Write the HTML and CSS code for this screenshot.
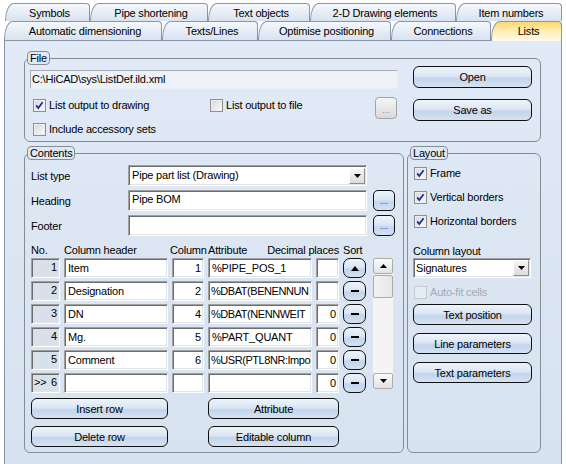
FILE: index.html
```html
<!DOCTYPE html>
<html lang="en">
  <head>
    <meta charset="UTF-8" />
    <meta name="viewport" content="width=device-width, initial-scale=1.0" />
    <title>Lists</title>
    <link rel="stylesheet" href="styles.css">
  </head>
  <body>
    <div class="tabs tabs-back">
      <div class="tab tab-symbols">Symbols</div>
      <div class="tab tab-pipe">Pipe shortening</div>
      <div class="tab tab-text">Text objects</div>
      <div class="tab tab-2d">2-D Drawing elements</div>
      <div class="tab tab-items">Item numbers</div>
    </div>
    <div class="tabs tabs-front">
      <div class="tab tab-auto">Automatic dimensioning</div>
      <div class="tab tab-lines">Texts/Lines</div>
      <div class="tab tab-optim">Optimise positioning</div>
      <div class="tab tab-conn">Connections</div>
      <div class="tab tab-lists active">Lists</div>
    </div>

    <div class="panel">
      <fieldset class="group file">
        <legend>File</legend>
        <div class="file-body">
          <div class="file-left">
            <div class="path">C:\HiCAD\sys\ListDef.ild.xml</div>
            <div class="file-opts">
              <label class="opt opt-draw">
                <span class="check"><svg width="11" height="11" viewBox="0 0 11 11"><path d="M2.2 5.4 L4.3 8 L8.6 2.3" fill="none" stroke="#1b2c9a" stroke-width="1.7"/></svg></span>List output to drawing
              </label>
              <label class="opt opt-file"><span class="check"></span>List output to file</label>
              <button class="dots-btn disabled">...</button>
            </div>
            <label class="opt opt-acc"><span class="check"></span>Include accessory sets</label>
          </div>
          <div class="file-right">
            <button class="btn">Open</button>
            <button class="btn btn-save">Save as</button>
          </div>
        </div>
      </fieldset>

      <div class="lower">
        <fieldset class="group contents">
          <legend>Contents</legend>
          <div class="contents-body">
            <div class="form-row">
              <span class="form-label">List type</span>
              <div class="field select wide">
                <span class="select-text">Pipe part list (Drawing)</span>
                <span class="drop"><svg width="7" height="4" viewBox="0 0 7 4"><path d="M0 0 H7 L3.5 4 Z" fill="#000"/></svg></span>
              </div>
            </div>
            <div class="form-row">
              <span class="form-label">Heading</span>
              <div class="field wide">Pipe BOM</div>
              <button class="dots-btn">...</button>
            </div>
            <div class="form-row">
              <span class="form-label">Footer</span>
              <div class="field wide"></div>
              <button class="dots-btn">...</button>
            </div>

            <div class="grid-head">
              <span>No.</span>
              <span>Column header</span>
              <span class="head-col">Column</span>
              <span class="head-attr"><span>Attribute</span><span>Decimal places</span></span>
              <span>Sort</span>
            </div>

            <div class="table-wrap">
              <div class="grid">
                <div class="cell no">1</div>
                <div class="cell">Item</div>
                <div class="cell num">1</div>
                <div class="cell">%PIPE_POS_1</div>
                <div class="cell num"></div>
                <div class="sort"><span class="arrow-up"></span></div>

                <div class="cell no">2</div>
                <div class="cell">Designation</div>
                <div class="cell num">2</div>
                <div class="cell attr">%DBAT(BENENNUN</div>
                <div class="cell num"></div>
                <div class="sort"><span class="dash"></span></div>

                <div class="cell no">3</div>
                <div class="cell">DN</div>
                <div class="cell num">4</div>
                <div class="cell attr">%DBAT(NENNWEIT</div>
                <div class="cell num">0</div>
                <div class="sort"><span class="dash"></span></div>

                <div class="cell no">4</div>
                <div class="cell">Mg.</div>
                <div class="cell num">5</div>
                <div class="cell">%PART_QUANT</div>
                <div class="cell num">0</div>
                <div class="sort"><span class="dash"></span></div>

                <div class="cell no">5</div>
                <div class="cell">Comment</div>
                <div class="cell num">6</div>
                <div class="cell attr">%USR(PTL8NR:Impo</div>
                <div class="cell num">0</div>
                <div class="sort"><span class="dash"></span></div>

                <div class="cell no no-new"><span>&gt;&gt;</span><span>6</span></div>
                <div class="cell"></div>
                <div class="cell num"></div>
                <div class="cell"></div>
                <div class="cell num">0</div>
                <div class="sort"><span class="dash"></span></div>
              </div>

              <div class="scrollbar">
                <div class="sb-btn"><svg width="7" height="4" viewBox="0 0 7 4"><path d="M0 4 H7 L3.5 0 Z" fill="#000"/></svg></div>
                <div class="sb-thumb"></div>
                <div class="sb-track"></div>
                <div class="sb-btn"><svg width="7" height="4" viewBox="0 0 7 4"><path d="M0 0 H7 L3.5 4 Z" fill="#000"/></svg></div>
              </div>
            </div>

            <div class="actions">
              <button class="btn">Insert row</button>
              <button class="btn">Attribute</button>
              <button class="btn">Delete row</button>
              <button class="btn">Editable column</button>
            </div>
          </div>
        </fieldset>

        <fieldset class="group layout">
          <legend>Layout</legend>
          <div class="layout-body">
            <div class="lay-checks">
              <label class="opt">
                <span class="check"><svg width="11" height="11" viewBox="0 0 11 11"><path d="M2.2 5.4 L4.3 8 L8.6 2.3" fill="none" stroke="#1b2c9a" stroke-width="1.7"/></svg></span>Frame
              </label>
              <label class="opt">
                <span class="check"><svg width="11" height="11" viewBox="0 0 11 11"><path d="M2.2 5.4 L4.3 8 L8.6 2.3" fill="none" stroke="#1b2c9a" stroke-width="1.7"/></svg></span>Vertical borders
              </label>
              <label class="opt">
                <span class="check"><svg width="11" height="11" viewBox="0 0 11 11"><path d="M2.2 5.4 L4.3 8 L8.6 2.3" fill="none" stroke="#1b2c9a" stroke-width="1.7"/></svg></span>Horizontal borders
              </label>
            </div>
            <div class="lay-label">Column layout</div>
            <div class="field select lay-select">
              <span class="select-text">Signatures</span>
              <span class="drop"><svg width="7" height="4" viewBox="0 0 7 4"><path d="M0 0 H7 L3.5 4 Z" fill="#000"/></svg></span>
            </div>
            <label class="opt opt-disabled"><span class="check"></span>Auto-fit cells</label>
            <div class="lay-buttons">
              <button class="btn">Text position</button>
              <button class="btn">Line parameters</button>
              <button class="btn">Text parameters</button>
            </div>
          </div>
        </fieldset>
      </div>
    </div>
  </body>
</html>
```

FILE: styles.css
```css
body {
  margin: 0;
  padding-top: 3px;
  width: 566px;
  height: 464px;
  overflow: hidden;
  background: #fff;
  font-family: "Liberation Sans", Arial, sans-serif;
  font-size: 11px;
  letter-spacing: -0.2px;
  color: #000;
}

/* tab strip */
.tabs {
  display: flex;
}
.tabs-back {
  margin-left: 5px;
  height: 18px;
}
.tabs-front {
  margin-left: 4px;
  height: 19px;
  position: relative;
  z-index: 1;
}
.tab {
  box-sizing: border-box;
  flex: none;
  border: 1px solid #8a97a8;
  border-bottom: none;
  border-radius: 9px 4px 0 0 / 17px 4px 0 0;
  background: linear-gradient(#f5f8fc, #d8e2ef);
  text-align: center;
  padding-left: 4px;
  white-space: nowrap;
}
.tabs-back .tab {
  height: 18px;
  line-height: 18px;
}
.tabs-front .tab {
  height: 19px;
  line-height: 19px;
}
.tab.active {
  height: 20px;
  background: linear-gradient(#fbd76e, #fff0bd 55%, #fffbea);
}
.tab-symbols { width: 85px; }
.tab-pipe { width: 118px; }
.tab-text { width: 102px; }
.tab-2d { width: 146px; }
.tab-items { width: 106px; }
.tab-auto { width: 158px; }
.tab-lines { width: 96px; }
.tab-optim { width: 133px; }
.tab-conn { width: 100px; }
.tab-lists { width: 71px; }

.panel {
  box-sizing: border-box;
  margin-left: 4px;
  width: 558px;
  height: 430px;
  border: 1px solid #8a97a8;
  border-bottom: none;
  background: linear-gradient(#e1eaf6, #d7e2f0);
  padding: 10px 0 0 19px;
}

/* group boxes */
.group {
  box-sizing: border-box;
  margin: 0;
  padding: 0;
  min-width: 0;
  border: 1px solid #858c96;
  border-radius: 6px;
}
.group legend {
  margin-left: 2px;
  padding: 0 2px;
  border: 1px solid #858c96;
  border-radius: 4px;
  line-height: 12px;
}
.file {
  width: 517px;
  height: 91px;
}
.lower {
  display: flex;
  gap: 3px;
  margin-top: 4px;
}
.contents {
  width: 380px;
  height: 307px;
}
.layout {
  width: 134px;
  height: 307px;
}

/* inputs */
.field {
  box-sizing: border-box;
  height: 21px;
  padding-left: 3px;
  line-height: 17px;
  background: #fff;
  border: 1px solid;
  border-color: #a0a0a0 #fff #fff #a0a0a0;
  box-shadow: inset 1px 1px #6d6d6d, inset -1px -1px #e3e3e3;
  white-space: nowrap;
  overflow: hidden;
}
.select {
  display: flex;
  align-items: center;
}
.select-text {
  flex: 1;
}
.drop {
  box-sizing: border-box;
  width: 16px;
  height: 16px;
  margin-right: 1px;
  display: flex;
  align-items: center;
  justify-content: center;
  background: linear-gradient(#f4f4f4, #dcdcdc);
  border: 1px solid;
  border-color: #fff #8d8d8d #8d8d8d #fff;
}
.path {
  box-sizing: border-box;
  height: 19px;
  padding-left: 1px;
  line-height: 17px;
  border: 1px solid;
  border-color: #a7aeb8 #e9eef5 #e9eef5 #a7aeb8;
  background: #edf2f9;
}

/* check boxes */
.opt {
  display: flex;
  align-items: center;
  height: 13px;
  line-height: 13px;
  white-space: nowrap;
}
.check {
  box-sizing: border-box;
  flex: none;
  width: 13px;
  height: 13px;
  margin-right: 3px;
  border: 1px solid #8e8f8f;
  background: linear-gradient(135deg, #d6d6d6, #fbfbfb);
  box-shadow: inset 0 0 0 1px #eeeeee;
  display: flex;
  align-items: center;
  justify-content: center;
}
.opt-disabled {
  color: #a3aab4;
}
.opt-disabled .check {
  border-color: #c3c9d1;
  background: #e6ecf3;
  box-shadow: none;
}

/* buttons */
.btn {
  box-sizing: border-box;
  display: block;
  height: 21px;
  padding: 0;
  border: 1px solid #111;
  border-radius: 6px;
  background: linear-gradient(#eef4fb, #dbe6f4 45%, #c3d5ec 58%, #d4e2f2);
  font: inherit;
  letter-spacing: inherit;
  color: #000;
}
.dots-btn {
  box-sizing: border-box;
  flex: none;
  width: 22px;
  height: 21px;
  padding: 0;
  border: 1px solid #111;
  border-radius: 5px;
  background: linear-gradient(#eef4fb, #dbe6f4 45%, #c3d5ec 58%, #d4e2f2);
  font: inherit;
  font-size: 9px;
  color: #4b2a86;
}
.dots-btn.disabled {
  height: 22px;
  border-color: #a3a3a3;
  border-radius: 4px;
  background: linear-gradient(#f6f6f6, #d9d9d9);
  color: #8c8c8c;
  margin: 0 1px 0 auto;
  padding-top: 3px;
}

/* file group */
.file-body {
  display: flex;
  gap: 15px;
  padding: 5px 0 0 5px;
}
.file-left {
  width: 368px;
}
.file-opts {
  display: flex;
  align-items: flex-start;
  height: 22px;
  margin-top: 8px;
}
.opt-draw {
  width: 177px;
  margin: 2px 0 0 3px;
}
.opt-file {
  margin-top: 2px;
}
.opt-acc {
  margin: 4px 0 0 3px;
}
.file-right {
  width: 119px;
  margin-top: -4px;
}
.file-right .btn {
  width: 119px;
  height: 22px;
}
.btn-save {
  margin-top: 11px;
}

/* contents group */
.contents-body {
  padding: 5px 0 0 6px;
}
.form-row {
  display: flex;
  align-items: center;
  height: 21px;
}
.form-row + .form-row {
  margin-top: 4px;
}
.form-label {
  width: 97px;
}
.wide {
  width: 239px;
}
.form-row .dots-btn {
  margin-left: 6px;
}

.grid-head,
.grid {
  display: grid;
  grid-template-columns: 29px 104px 32px 104px 23px 23px;
  column-gap: 4px;
}
.grid-head {
  margin-top: 7px;
  height: 15px;
  line-height: 14px;
  white-space: nowrap;
}
.head-col {
  margin-left: -2px;
}
.head-attr {
  grid-column: span 2;
  display: flex;
  justify-content: space-between;
}
.table-wrap {
  display: flex;
  align-items: flex-start;
}
.grid {
  grid-auto-rows: 20px;
  row-gap: 3px;
}
.cell {
  box-sizing: border-box;
  padding: 0 2px 0 3px;
  line-height: 18px;
  background: #fff;
  border: 1px solid;
  border-color: #a0a0a0 #fff #fff #a0a0a0;
  box-shadow: inset 1px 1px #6d6d6d, inset -1px -1px #e3e3e3;
  white-space: nowrap;
  overflow: hidden;
}
.attr {
  padding-left: 2px;
  letter-spacing: -0.45px;
}
.num {
  text-align: right;
}
.no {
  background: #d8e0ea;
  text-align: right;
  line-height: 16px;
}
.no-new {
  display: flex;
  justify-content: space-between;
  padding-left: 2px;
}
.sort {
  box-sizing: border-box;
  border: 1px solid #111;
  border-radius: 7px;
  background: linear-gradient(#eef4fb, #dbe6f4 45%, #c3d5ec 58%, #d4e2f2);
  display: flex;
  align-items: center;
  justify-content: center;
}
.arrow-up {
  width: 0;
  height: 0;
  border-left: 4px solid transparent;
  border-right: 4px solid transparent;
  border-bottom: 5px solid #000;
}
.dash {
  width: 8px;
  height: 2px;
  background: #000;
}
.scrollbar {
  display: flex;
  flex-direction: column;
  width: 20px;
  height: 131px;
  margin-left: 7px;
  background: #f4f4f4;
}
.sb-btn {
  box-sizing: border-box;
  height: 16px;
  border: 1px solid #acacac;
  border-radius: 2px;
  background: linear-gradient(#fbfbfb, #e3e3e3);
  display: flex;
  align-items: center;
  justify-content: center;
}
.sb-thumb {
  box-sizing: border-box;
  height: 23px;
  margin-top: 1px;
  border: 1px solid #acacac;
  border-radius: 2px;
  background: linear-gradient(90deg, #f3f3f3, #e6e6e6);
}
.sb-track {
  flex: 1;
}
.actions {
  display: grid;
  grid-template-columns: 137px 131px;
  grid-auto-rows: 21px;
  column-gap: 40px;
  row-gap: 7px;
  margin-top: 5px;
}

/* layout group */
.layout-body {
  padding: 7px 0 0 6px;
}
.lay-checks {
  display: flex;
  flex-direction: column;
  gap: 11px;
}
.lay-label {
  margin: 16px 0 0 -1px;
  line-height: 14px;
}
.lay-select {
  width: 118px;
  height: 20px;
  margin-left: -1px;
  padding-left: 2px;
}
.layout .opt-disabled {
  margin-top: 8px;
}
.lay-buttons {
  display: flex;
  flex-direction: column;
  gap: 8px;
  margin: 5px 0 0 -1px;
}
.lay-buttons .btn {
  width: 119px;
}
```
